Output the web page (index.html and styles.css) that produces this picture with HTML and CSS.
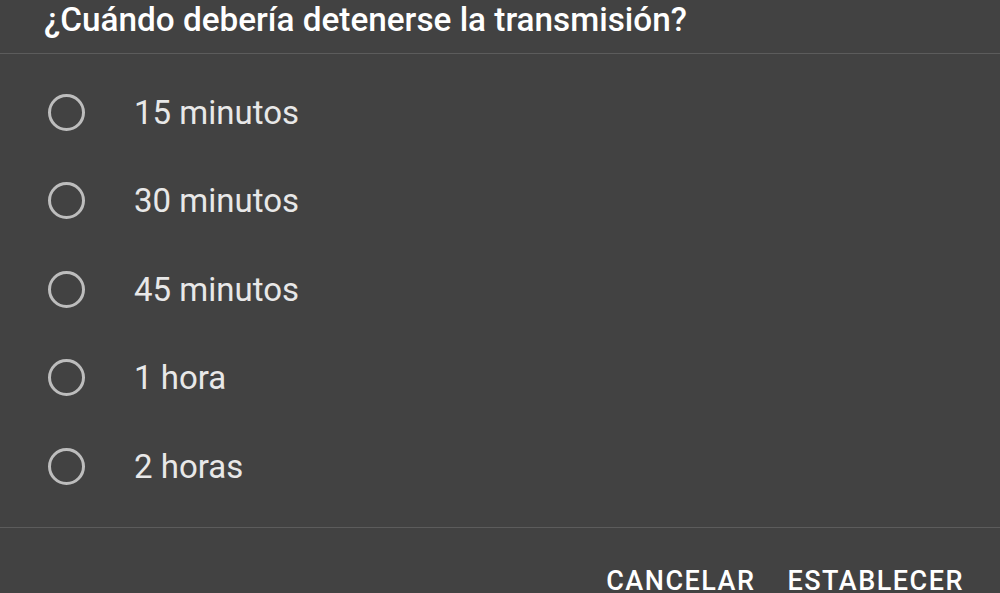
FILE: index.html
```html
<!DOCTYPE html>
<html lang="es">
<head>
    <meta charset="UTF-8">
    <meta name="viewport" content="width=device-width, initial-scale=1.0">
    <title>Detener transmisión</title>
    <link rel="stylesheet" href="styles.css">
</head>
<body>
    <div class="dialog">
        <div class="title">¿Cuándo debería detenerse la transmisión?</div>
        <div class="options">
            <div class="option"><span class="radio"></span><span class="label">15 minutos</span></div>
            <div class="option"><span class="radio"></span><span class="label">30 minutos</span></div>
            <div class="option"><span class="radio"></span><span class="label">45 minutos</span></div>
            <div class="option"><span class="radio"></span><span class="label">1 hora</span></div>
            <div class="option"><span class="radio"></span><span class="label">2 horas</span></div>
        </div>
        <div class="actions">
            <span class="btn">CANCELAR</span>
            <span class="btn">ESTABLECER</span>
        </div>
    </div>
</body>
</html>
```

FILE: styles.css
```css
* {
    margin: 0;
    padding: 0;
    box-sizing: border-box;
}
body {
    background-color: #424242;
    font-family: Roboto, "Noto Sans", sans-serif;
    overflow: hidden;
}
.dialog {
    display: flex;
    flex-direction: column;
    height: 593px;
}
.title {
    flex-shrink: 0;
    height: 54px;
    padding: 0 0 0 44px;
    font-size: 33.3px;
    line-height: 40px;
    font-weight: 500;
    color: #ffffff;
    border-bottom: 1px solid #5c5c5c;
}
.options {
    flex-shrink: 0;
    padding: 14px 0 16px 0;
    border-bottom: 1px solid #5c5c5c;
}
.option {
    display: flex;
    align-items: center;
    height: 88.5px;
}
.radio {
    width: 37px;
    height: 37px;
    margin-left: 48px;
    border: 3px solid #bdbdbd;
    border-radius: 50%;
}
.label {
    margin-left: 49px;
    font-size: 33px;
    color: #e8e8e8;
}
.actions {
    flex-shrink: 0;
    display: flex;
    justify-content: flex-end;
    gap: 32px;
    padding: 41px 36px 0 0;
}
.btn {
    font-size: 27px;
    line-height: 24px;
    font-weight: 500;
    letter-spacing: 1.5px;
    color: #ffffff;
}
```
